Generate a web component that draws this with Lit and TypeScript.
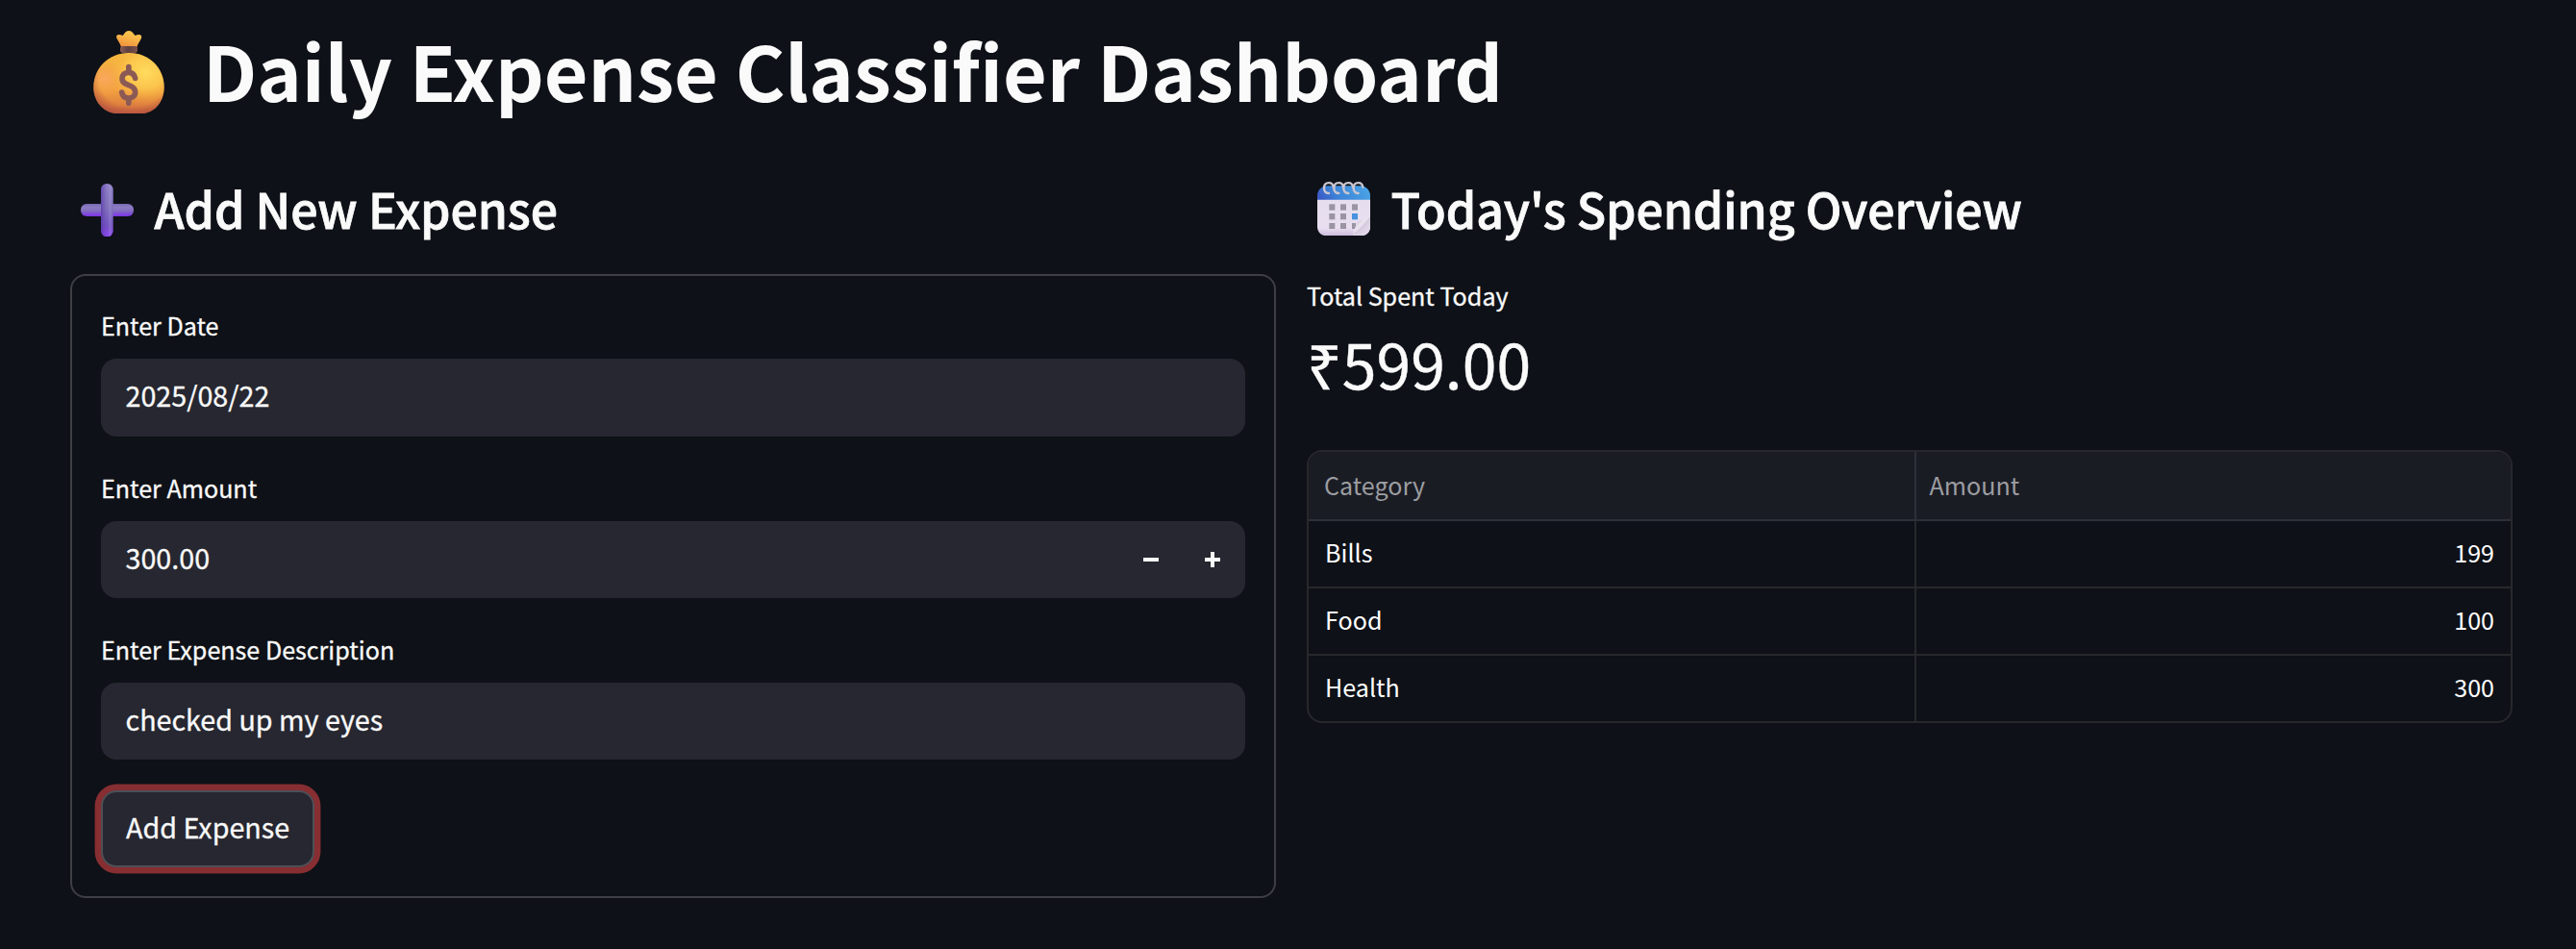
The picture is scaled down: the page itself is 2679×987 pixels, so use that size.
import { LitElement, html, css } from "lit";
import { customElement, property, state } from "lit/decorators.js";

const moneyBag = html`<svg class="bag" viewBox="51 33 222 261" aria-hidden="true">
  <defs>
    <linearGradient id="bagBase" x1="0" y1="0" x2="0" y2="1">
      <stop offset="0" stop-color="#f6b83f" />
      <stop offset="0.6" stop-color="#f3a23f" />
      <stop offset="0.85" stop-color="#e0823f" />
      <stop offset="1" stop-color="#c05c40" />
    </linearGradient>
    <radialGradient id="bagShine" cx="0.74" cy="0.32" r="0.52">
      <stop offset="0" stop-color="#ffdc5e" />
      <stop offset="0.5" stop-color="#fdcd50" stop-opacity="0.8" />
      <stop offset="1" stop-color="#f6b040" stop-opacity="0" />
    </radialGradient>
    <radialGradient id="bagSide" cx="0.16" cy="0.42" r="0.3">
      <stop offset="0" stop-color="#fba860" />
      <stop offset="1" stop-color="#f5a045" stop-opacity="0" />
    </radialGradient>
    <radialGradient id="bagEdge" cx="0.56" cy="0.4" r="0.66">
      <stop offset="0.74" stop-color="#b9533f" stop-opacity="0" />
      <stop offset="1" stop-color="#b04f40" stop-opacity="0.75" />
    </radialGradient>
    <linearGradient id="bagTop" x1="0.2" y1="1" x2="0.6" y2="0">
      <stop offset="0" stop-color="#ee8b3b" />
      <stop offset="0.6" stop-color="#f8b648" />
      <stop offset="1" stop-color="#fdc84f" />
    </linearGradient>
    <linearGradient id="bagTie" x1="0" y1="0" x2="1" y2="0">
      <stop offset="0" stop-color="#8a5a54" />
      <stop offset="0.45" stop-color="#5d4040" />
      <stop offset="1" stop-color="#7b5049" />
    </linearGradient>
  </defs>
  <path fill="url(#bagTop)" d="M124 59C120 47 131 45 143 51C148 46 151 36 162 36C173 36 176 46 182 51C193 45 205 48 201 59C198 68 190 74 187 87H138C135 74 128 68 124 59Z" />
  <path fill="url(#bagBase)" d="M119 294C80 288 52 255 52 212C52 152 100 105 162 105C224 105 272 152 272 212C272 255 245 290 206 294Z" />
  <path fill="url(#bagSide)" d="M119 294C80 288 52 255 52 212C52 152 100 105 162 105C224 105 272 152 272 212C272 255 245 290 206 294Z" />
  <path fill="url(#bagShine)" d="M119 294C80 288 52 255 52 212C52 152 100 105 162 105C224 105 272 152 272 212C272 255 245 290 206 294Z" />
  <path fill="url(#bagEdge)" d="M119 294C80 288 52 255 52 212C52 152 100 105 162 105C224 105 272 152 272 212C272 255 245 290 206 294Z" />
  <rect x="135" y="84" width="54" height="21" rx="8" fill="url(#bagTie)" />
  <path fill="none" stroke="#8c5a54" stroke-width="17" stroke-linecap="round" d="M182 184C179 172 171 166 161 166C149 166 141 174 141 185C141 197 150 201 162 206C174 210 182 215 182 228C182 239 173 246 161 246C150 246 142 240 140 228M161.500 149V166M161.500 246V262" />
</svg>`;

const plusSign = html`<svg class="plus-sign" viewBox="24 26 165 166" aria-hidden="true">
  <defs>
    <linearGradient id="armH" x1="0" y1="0" x2="0" y2="1">
      <stop offset="0" stop-color="#7a68b4" />
      <stop offset="0.3" stop-color="#8d7ec2" />
      <stop offset="0.6" stop-color="#8069bf" />
      <stop offset="0.85" stop-color="#8043e2" />
      <stop offset="1" stop-color="#7a35dc" />
    </linearGradient>
    <linearGradient id="armV" x1="0" y1="0" x2="0" y2="1">
      <stop offset="0" stop-color="#9486c8" />
      <stop offset="0.45" stop-color="#8476bd" />
      <stop offset="0.8" stop-color="#7350c4" />
      <stop offset="0.93" stop-color="#8a45ee" />
      <stop offset="1" stop-color="#8a3ff2" />
    </linearGradient>
    <linearGradient id="armShade" x1="0" y1="0" x2="1" y2="0">
      <stop offset="0" stop-color="#5230a8" stop-opacity="0.7" />
      <stop offset="0.5" stop-color="#6a50b0" stop-opacity="0.15" />
      <stop offset="0.75" stop-color="#a89ad8" stop-opacity="0.35" />
      <stop offset="1" stop-color="#6a55b0" stop-opacity="0.2" />
    </linearGradient>
  </defs>
  <rect x="24" y="89" width="165" height="39" rx="18" fill="url(#armH)" />
  <rect x="87" y="26" width="38" height="166" rx="19" fill="url(#armV)" />
  <rect x="87" y="26" width="38" height="166" rx="19" fill="url(#armShade)" />
</svg>`;

const ring = (x: number) => `M${x} 93C${x - 11} 92 ${x - 15} 85 ${x - 15} 77C${x - 15} 66 ${x - 9} 60.500 ${x} 60.500C${x + 8} 60.500 ${x + 13} 66 ${x + 14} 74`;

const calendar = html`<svg class="calendar" viewBox="60 57 165 168" aria-hidden="true">
  <defs>
    <linearGradient id="calPage" x1="0" y1="0" x2="0" y2="1">
      <stop offset="0" stop-color="#e6deee" />
      <stop offset="0.8" stop-color="#e8def0" />
      <stop offset="1" stop-color="#cdbbdc" />
    </linearGradient>
    <linearGradient id="calBand" x1="0" y1="0.6" x2="1" y2="0.4">
      <stop offset="0" stop-color="#3b5cc8" />
      <stop offset="0.35" stop-color="#3d84d8" />
      <stop offset="1" stop-color="#4ba4e6" />
    </linearGradient>
    <linearGradient id="calCurl" x1="0.3" y1="0.3" x2="0.8" y2="0.8">
      <stop offset="0" stop-color="#cfc4d6" />
      <stop offset="0.25" stop-color="#ece6f0" />
      <stop offset="0.6" stop-color="#d9cfe2" />
      <stop offset="1" stop-color="#e2d8ea" />
    </linearGradient>
  </defs>
  <path fill="url(#calPage)" d="M60 108H225V197C225 214 213 225 197 225H88C72 225 60 214 60 197Z" />
  <path fill="url(#calBand)" d="M60 113V100C60 84 74 70 90 70H195C211 70 225 84 225 100V113Z" />
  <g fill="#9a94a2">
    <rect x="97" y="127" width="18" height="19" /><rect x="132" y="127" width="18" height="19" /><rect x="168" y="127" width="18" height="19" />
    <rect x="97" y="156" width="18" height="19" /><rect x="132" y="156" width="18" height="19" />
    <rect x="97" y="186" width="18" height="18" /><rect x="132" y="186" width="18" height="18" /><rect x="168" y="186" width="12" height="18" />
  </g>
  <rect x="168" y="156" width="18" height="19" fill="#4692de" />
  <path fill="url(#calCurl)" d="M167 225C180 207 176 186 193 179C206 175 216 170 225 166V197C225 214 213 225 197 225Z" />
  <path fill="none" stroke="#bfb3c9" stroke-width="2" d="M168 224C190 212 212 190 225 168" />
  <g fill="none" stroke="#cbc6cf" stroke-width="7" stroke-linecap="round">
    <path d=${ring(96)} /><path d=${ring(127)} /><path d=${ring(157)} /><path d=${ring(188)} />
  </g>
</svg>`;

const headingStyles = css`
  .heading {
    display: flex;
    align-items: flex-start;
    margin: 0;
    height: 60px;
    font-size: 50px;
    line-height: 60px;
    font-weight: 500;
    letter-spacing: -0.080px;
    -webkit-text-stroke: 0.8px #fafafa;
    white-space: nowrap;
  }
  svg { display: block; flex: none; -webkit-text-stroke: 0; }
`;

@customElement("expense-form")
export class ExpenseForm extends LitElement {
  @state() private date = "2025/08/22";
  @state() private amount = 300;
  @state() private description = "checked up my eyes";

  static styles = [
    headingStyles,
    css`
      :host { display: block; min-width: 0; }
      .plus-sign { width: 55px; height: 55.300px; margin: 4.700px 21.500px 0 11px; }
      .form {
        box-sizing: border-box;
        margin-top: 39px;
        padding: 31px 30px 30px;
        border: 2px solid #3d3f44;
        border-radius: 16px;
      }
      .field { margin-bottom: 33px; }
      .field.last { margin-bottom: 32px; }
      .label {
        height: 40px;
        line-height: 40px;
        font-size: 25.100px;
        margin-bottom: 15px;
        -webkit-text-stroke: 0.3px #fafafa;
      }
      .control {
        box-sizing: border-box;
        display: flex;
        align-items: stretch;
        height: 80px;
        padding: 0 2px 0 25.500px;
        border-radius: 16px;
        background: #262730;
      }
      .control.tall { height: 81px; }
      .value {
        flex: 1;
        align-self: center;
        font-size: 28.700px;
        line-height: 48px;
        padding-bottom: 5px;
        -webkit-text-stroke: 0.3px #fafafa;
      }
      .step {
        display: flex;
        align-items: center;
        justify-content: center;
        width: 64px;
        padding: 0;
        border: 0;
        background: none;
      }
      .step svg { width: 16px; height: 16px; }
      .submit {
        display: block;
        box-sizing: border-box;
        height: 80px;
        padding: 0 24px 5px;
        border: 2px solid #4d4f56;
        border-radius: 16px;
        background: #262730;
        box-shadow: 0 0 0 6.400px #862e31;
        color: #fafafa;
        font: 400 28.700px/48px "Noto Sans CJK SC", sans-serif;
        -webkit-text-stroke: 0.3px #fafafa;
      }
    `,
  ];

  render() {
    return html`
      <h2 class="heading">${plusSign}Add New Expense</h2>
      <div class="form">
        <div class="field">
          <div class="label">Enter Date</div>
          <div class="control tall"><span class="value">${this.date}</span></div>
        </div>
        <div class="field">
          <div class="label">Enter Amount</div>
          <div class="control">
            <span class="value">${this.amount.toFixed(2)}</span>
            <button class="step" @click=${() => (this.amount -= 1)}>
              <svg viewBox="0 0 16 16"><path d="M0 6h16v4H0z" fill="#fafafa" /></svg>
            </button>
            <button class="step" @click=${() => (this.amount += 1)}>
              <svg viewBox="0 0 16 16"><path d="M6 0h4v6h6v4h-6v6H6v-6H0V6h6z" fill="#fafafa" /></svg>
            </button>
          </div>
        </div>
        <div class="field last">
          <div class="label">Enter Expense Description</div>
          <div class="control"><span class="value">${this.description}</span></div>
        </div>
        <button class="submit">Add Expense</button>
      </div>
    `;
  }
}

interface Row {
  category: string;
  amount: number;
}

@customElement("spending-overview")
export class SpendingOverview extends LitElement {
  @property({ attribute: false }) rows: Row[] = [];

  static styles = [
    headingStyles,
    css`
      :host { display: block; min-width: 0; }
      .calendar { width: 55px; height: 56px; margin: 3px 21.500px 0 11px; }
      .caption {
        margin-top: 41px;
        height: 40px;
        line-height: 40px;
        font-size: 25.100px;
        -webkit-text-stroke: 0.3px #fafafa;
      }
      .total {
        margin-top: 10px;
        height: 80px;
        line-height: 80px;
        font-size: 64.300px;
        -webkit-text-stroke: 0.4px #fafafa;
      }
      .table {
        margin-top: 51px;
        border: 2px solid #26282c;
        border-radius: 16px;
        overflow: hidden;
        font-size: 25.100px;
      }
      .row {
        display: grid;
        grid-template-columns: 632px 1fr;
        height: 68px;
        line-height: 64px;
        border-bottom: 2px solid #26282c;
        color: #ffffff;
      }
      .row:last-child { border-bottom: 0; }
      .row.head {
        height: 70px;
        line-height: 68px;
        border-bottom-color: #2d3038;
        background: #1a1c24;
        color: #9c9da1;
      }
      .cell { padding: 0 17px; }
      .cell:first-child { border-right: 2px solid #26282c; }
      .head .cell { padding-left: 13.500px; }
      .head .cell:first-child { padding-left: 16px; border-right-color: #2d3038; }
      .number { text-align: right; }
    `,
  ];

  render() {
    const total = this.rows.reduce((sum, r) => sum + r.amount, 0);
    return html`
      <h2 class="heading">${calendar}Today's Spending Overview</h2>
      <div class="caption">Total Spent Today</div>
      <div class="total">₹${total.toFixed(2)}</div>
      <div class="table">
        <div class="row head"><div class="cell">Category</div><div class="cell">Amount</div></div>
        ${this.rows.map(
          (r) => html`<div class="row"><div class="cell">${r.category}</div><div class="cell number">${r.amount}</div></div>`
        )}
      </div>
    `;
  }
}

@customElement("app-root")
export class AppRoot extends LitElement {
  private rows: Row[] = [
    { category: "Bills", amount: 199 },
    { category: "Food", amount: 100 },
    { category: "Health", amount: 300 },
  ];

  static styles = css`
    :host {
      display: block;
      box-sizing: border-box;
      height: 987px;
      padding: 24px 66px 0 73px;
      background: #0e1117;
      color: #fafafa;
      font-family: "Noto Sans CJK SC", "Noto Sans", sans-serif;
    }
    .title {
      display: flex;
      align-items: flex-start;
      margin: 0;
      height: 96px;
      line-height: 96px;
      font-size: 78.900px;
      font-weight: 700;
      letter-spacing: -0.040px;
      white-space: nowrap;
    }
    .bag { display: block; flex: none; width: 74px; height: 87px; margin: 7px 40px 0 24px; }
    .columns {
      display: grid;
      grid-template-columns: 1fr 1fr;
      gap: 32px;
      margin-top: 66px;
    }
  `;

  render() {
    return html`
      <h1 class="title">${moneyBag}Daily Expense Classifier Dashboard</h1>
      <div class="columns">
        <expense-form></expense-form>
        <spending-overview .rows=${this.rows}></spending-overview>
      </div>
    `;
  }
}
